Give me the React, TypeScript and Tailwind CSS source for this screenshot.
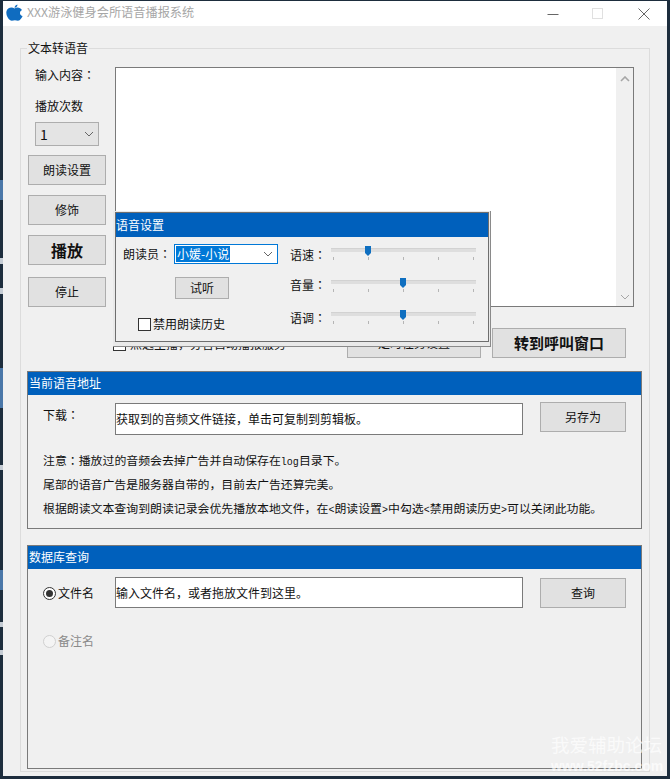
import React from "react";

const font = { fontFamily: '"Noto Sans CJK SC", "Liberation Sans", sans-serif' };

function Colon() {
  return <span className="font-['Noto_Sans_CJK_TC',sans-serif] leading-none">：</span>;
}

function Mono({ children }: { children: React.ReactNode }) {
  return <span className="font-['Liberation_Mono',monospace] text-[10px] leading-none">{children}</span>;
}

function Btn({ className = "", children }: { className?: string; children: React.ReactNode }) {
  return (
    <button className={`flex items-center justify-center border border-[#adadad] bg-[#e1e1e1] text-[12px] text-[#111] ${className}`}>
      {children}
    </button>
  );
}

function Chevron({ up = false, color = "#666", className = "" }: { up?: boolean; color?: string; className?: string }) {
  return (
    <svg width="10" height="6" viewBox="0 0 10 6" className={className}>
      <path d={up ? "M1 5 L5 1 L9 5" : "M1 1 L5 5 L9 1"} fill="none" stroke={color} strokeWidth={up ? 1.6 : 1} />
    </svg>
  );
}

function Section({ title, className = "", children }: { title: string; className?: string; children: React.ReactNode }) {
  return (
    <section className={`flex flex-col border border-[#7a7a7a] ${className}`}>
      <div className="flex h-[23px] shrink-0 items-center bg-[#0060bc] pb-[1px] pl-[1px] text-[12px] text-white">{title}</div>
      {children}
    </section>
  );
}

function TextBox({ children, className = "" }: { children: React.ReactNode; className?: string }) {
  return (
    <div className={`flex w-[408px] items-center border border-[#7a7a7a] bg-white text-[12px] text-[#111] ${className}`}>
      {children}
    </div>
  );
}

function Slider({ pos }: { pos: number }) {
  const ticks = [2, 37, 72, 107, 142];
  return (
    <svg width="146" height="16" viewBox="0 0 146 16" className="block overflow-visible">
      <rect x="0" y="0" width="145" height="4" fill="#dedede" />
      <rect x="0" y="0" width="145" height="1" fill="#d2d2d2" />
      {ticks.map((t) => (
        <rect key={t} x={t} y="9" width="1" height="3" fill="#b5b5b5" />
      ))}
      <path d={`M${pos - 3} -2 H${pos + 3} V5 L${pos} 8 L${pos - 3} 5 Z`} fill="#0f6fc0" />
    </svg>
  );
}

function VoiceDialog() {
  return (
    <div className="absolute left-[113px] top-[211px] h-[136px] w-[378px] border-b border-r border-[#8a8a8a] bg-[#e9e9e9] pl-[2px] pt-[1px]">
      <div className="flex h-[130px] w-[374px] flex-col border border-[#6e6e6e] bg-[#f0f0f0] text-[12px] text-[#111]">
        <div className="flex h-[24px] shrink-0 items-center bg-[#0060bc] text-white">语音设置</div>
        <div className="flex flex-1">
          <div className="flex w-[174px] flex-col pl-[7px]">
            <div className="mt-[7px] flex h-[20px] items-center">
              <span className="w-[51px]">朗读员<Colon /></span>
              <div className="flex h-[20px] w-[104px] items-center border border-[#0078d7] bg-white pl-[1px] pr-[4px]">
                <span className="bg-[#0078d7] px-[1px] leading-[16px] text-white">小媛-小说</span>
                <Chevron className="ml-auto" />
              </div>
            </div>
            <Btn className="ml-[52px] mt-[13px] h-[22px] w-[54px]">试听</Btn>
            <div className="ml-[15px] mt-[16px] flex items-center gap-[2px]">
              <span className="h-[13px] w-[13px] border border-[#333] bg-white" />
              <span>禁用朗读历史</span>
            </div>
          </div>
          <div className="flex flex-col pt-[11px]">
            <div className="flex h-[32px] items-start">
              <span className="mt-[-1px] w-[41px] leading-[16px]">语速<Colon /></span>
              <Slider pos={37} />
            </div>
            <div className="flex h-[32px] items-start">
              <span className="mt-[-3px] w-[41px] leading-[16px]">音量<Colon /></span>
              <Slider pos={72} />
            </div>
            <div className="flex h-[32px] items-start">
              <span className="mt-[-2px] w-[41px] leading-[16px]">语调<Colon /></span>
              <Slider pos={72} />
            </div>
          </div>
        </div>
      </div>
    </div>
  );
}

function Logo() {
  return (
    <svg width="17" height="17" viewBox="0 0 16 16" className="mt-[-2px] shrink-0">
      <path
        d="M8 4.2C9.6 3.2 11.6 3 13.2 4 14 4.5 14.6 5 15 5.7 13.6 6.5 13 7.8 13.2 9 13.4 10.2 14.2 11 15.6 11.4 15 13 14 14.4 12.8 15.3 11.4 16.2 10 15.4 8.4 15.4 6.8 15.4 5.4 16.4 4 15.4 1.6 13.8 -.2 10 .4 7 1 3.8 5.2 2.4 8 4.2Z"
        fill="#0f6cc0"
      />
      <path d="M8 3.6C8 2 9.2 .6 10.8 .4 10.9 2 9.6 3.5 8 3.6Z" fill="#0f6cc0" />
    </svg>
  );
}

function TitleBar() {
  return (
    <div className="flex h-[25px] shrink-0 items-center bg-white pl-[3px] pr-[17px]">
      <Logo />
      <span className="ml-[4px] mt-[-2px] text-[12.2px] text-[#a6a6a6]">XXX游泳健身会所语音播报系统</span>
      <svg width="12" height="12" viewBox="0 0 12 12" className="ml-auto">
        <path d="M0.5 6.5H11.5" stroke="#666" strokeWidth="1" />
      </svg>
      <svg width="11" height="11" viewBox="0 0 11 11" className="ml-[33px]">
        <rect x="0.5" y="0.5" width="10" height="10" fill="none" stroke="#e0e0e0" />
      </svg>
      <svg width="12" height="12" viewBox="0 0 12 12" className="ml-[35px]">
        <path d="M0.5 0.5L11.5 11.5M11.5 0.5L0.5 11.5" stroke="#555" strokeWidth="0.9" />
      </svg>
    </div>
  );
}

export default function App() {
  return (
    <div style={font} className="relative flex h-[779px] w-[670px] overflow-hidden bg-[#1d2d3d] pb-[3px] pr-[3px] pt-[1px]">
      <div className="mb-[-3px] mt-[-1px] w-[3px] shrink-0 bg-[linear-gradient(to_bottom,#1d2d3d_180px,#4a77a8_180px,#4a77a8_200px,#1d2d3d_200px,#1d2d3d_258px,#c5ccd4_258px,#c5ccd4_264px,#1d2d3d_264px,#1d2d3d_288px,#c5ccd4_288px,#c5ccd4_294px,#1d2d3d_294px,#1d2d3d_368px,#4a77a8_368px,#4a77a8_408px,#1d2d3d_408px,#1d2d3d_465px,#c5ccd4_465px,#c5ccd4_470px,#1d2d3d_470px,#1d2d3d_570px,#4a77a8_570px,#4a77a8_590px,#1d2d3d_590px,#1d2d3d_622px,#c5ccd4_622px,#c5ccd4_627px,#1d2d3d_627px,#1d2d3d_650px,#c5ccd4_650px,#c5ccd4_655px,#1d2d3d_655px)]" />
      <div className="flex min-w-0 flex-1 flex-col">
        <TitleBar />
        <div className="flex-1 bg-[#f0f0f0] pb-[4px] pl-[17px] pr-[17px] pt-[22px]">
          <div className="flex h-full flex-col border border-[#dcdcdc] pl-[6px] pr-[7px]">
            <div className="ml-0 mt-[-9px] h-[16px] w-fit bg-[#f0f0f0] px-[1px] text-[12px] leading-[16px] text-[#111]">文本转语音</div>

            <div className="mt-[11px] flex h-[240px] shrink-0">
              <div className="flex w-[88px] shrink-0 flex-col text-[12px] text-[#111]">
                <span className="pl-[8px] leading-[16px]">输入内容<Colon /></span>
                <span className="mt-[15px] pl-[8px] leading-[16px]">播放次数</span>
                <div className="ml-[8px] mt-[8px] flex h-[24px] w-[64px] items-center border border-[#adadad] bg-[#e4e4e4] pl-[4px] pr-[4px] text-[14px]">
                  <span>1</span>
                  <Chevron className="ml-auto" />
                </div>
                <Btn className="ml-[1px] mt-[9px] h-[30px] w-[78px]">朗读设置</Btn>
                <Btn className="ml-[1px] mt-[10px] h-[30px] w-[78px]">修饰</Btn>
                <Btn className="ml-[1px] mt-[10px] h-[30px] w-[78px] !text-[16px] font-bold">播放</Btn>
                <Btn className="ml-[1px] mt-[12px] h-[30px] w-[78px]">停止</Btn>
              </div>
              <div className="flex h-[240px] w-[519px] shrink-0 justify-end border border-[#7a7a7a] bg-white">
                <div className="flex w-[17px] flex-col items-center justify-between bg-[#f0f0f0] pb-[6px] pt-[8px]">
                  <Chevron up color="#a6a6a6" />
                  <Chevron color="#a6a6a6" />
                </div>
              </div>
            </div>

            <div className="mt-[21px] flex h-[30px] shrink-0 items-start">
              <div className="ml-[86px] mt-[8px] flex items-center gap-[4px] text-[12px] text-[#111]">
                <span className="h-[13px] w-[13px] border border-[#333] bg-white" />
                <span className="leading-[16px]">点选主播，分音自动播报服务</span>
              </div>
              <Btn className="ml-auto h-[30px] w-[134px]">定时任务设置</Btn>
              <Btn className="ml-[11px] mr-[16px] h-[30px] w-[134px] !text-[15px] font-bold">转到呼叫窗口</Btn>
            </div>

            <Section title="当前语音地址" className="mt-[13px] h-[158px] shrink-0">
              <div className="flex items-start pt-[7px] text-[12px] text-[#111]">
                <span className="ml-[15px] mt-[5px] w-[72px] leading-[16px]">下载<Colon /></span>
                <TextBox className="mt-[1px] h-[32px]">获取到的音频文件链接，单击可复制到剪辑板。</TextBox>
                <Btn className="ml-[17px] h-[30px] w-[86px]">另存为</Btn>
              </div>
              <div className="mt-[16px] flex flex-col gap-[7px] pl-[15px] text-[11.9px] leading-[17px] text-[#111]">
                <p>注意<Colon />播放过的音频会去掉广告并自动保存在<Mono>log</Mono>目录下。</p>
                <p>尾部的语音广告是服务器自带的，目前去广告还算完美。</p>
                <p>根据朗读文本查询到朗读记录会优先播放本地文件，在<Mono>&lt;</Mono>朗读设置<Mono>&gt;</Mono>中勾选<Mono>&lt;</Mono>禁用朗读历史<Mono>&gt;</Mono>可以关闭此功能。</p>
              </div>
            </Section>

            <Section title="数据库查询" className="mb-[2px] mt-[16px] min-h-0 flex-1">
              <div className="flex items-start pt-[8px] text-[12px] text-[#111]">
                <div className="ml-[15px] mt-[8px] flex w-[72px] items-center gap-[2px]">
                  <span className="flex h-[13px] w-[13px] items-center justify-center rounded-full border border-[#333] bg-white">
                    <span className="h-[7px] w-[7px] rounded-full bg-[#333]" />
                  </span>
                  <span className="leading-[16px]">文件名</span>
                </div>
                <TextBox className="h-[31px]">输入文件名，或者拖放文件到这里。</TextBox>
                <Btn className="ml-[17px] mt-[1px] h-[30px] w-[86px]">查询</Btn>
              </div>
              <div className="ml-[15px] mt-[25px] flex items-center gap-[2px] text-[12px] text-[#8a8a8a]">
                <span className="h-[13px] w-[13px] rounded-full border border-[#d0d0d0] bg-[#f4f4f4]" />
                <span className="leading-[16px]">备注名</span>
              </div>
            </Section>
          </div>
        </div>
      </div>

      <VoiceDialog />

      <div className="pointer-events-none absolute left-[551px] top-[732px] flex flex-col text-white/70">
        <span className="text-[18.5px] leading-[24px]">我爱辅助论坛</span>
        <span className="font-['Liberation_Sans',sans-serif] text-[14px] font-bold leading-[20px]">www.52fzbc.com</span>
      </div>
    </div>
  );
}
